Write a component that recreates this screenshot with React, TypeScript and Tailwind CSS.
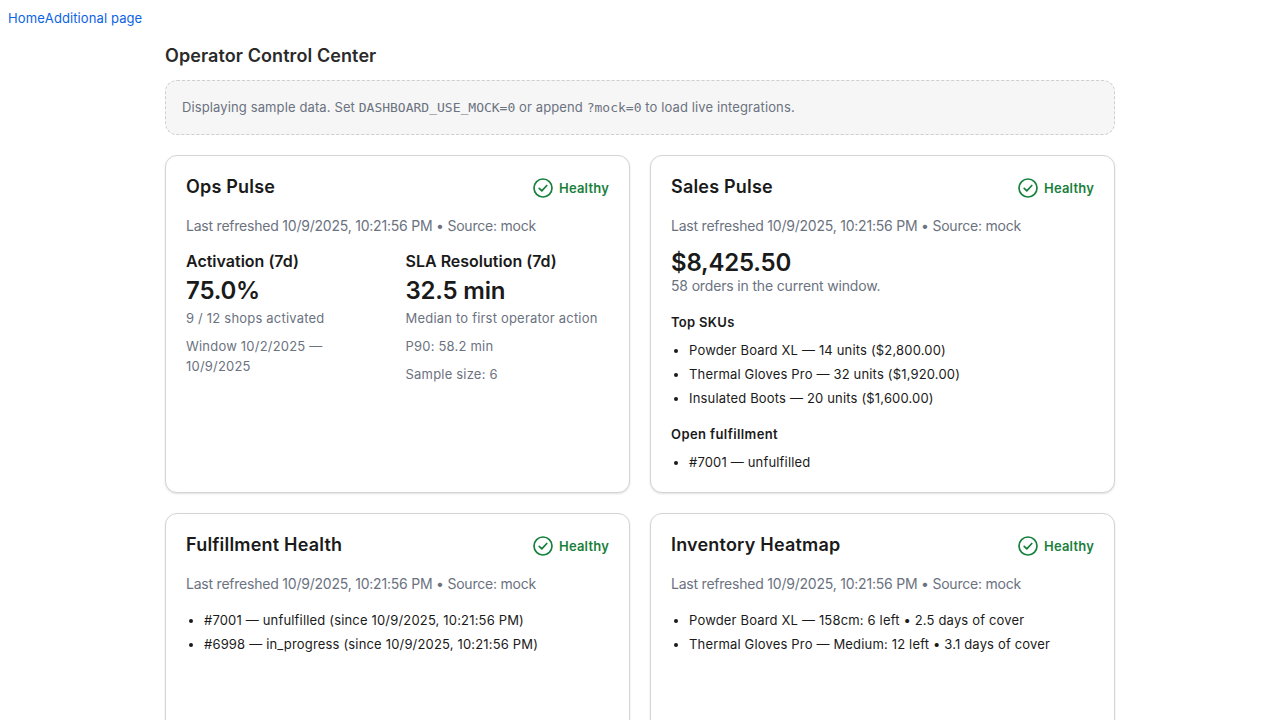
import React from 'react';

const mono = 'font-["DejaVu_Sans_Mono",monospace]';

function HealthyBadge() {
    return (
        <div className="flex items-center gap-[6px] pt-[2px]">
            <svg width="20" height="20" viewBox="0 0 20 20" fill="none" stroke="#16803c">
                <circle cx="10" cy="10" r="9" strokeWidth="1.7" />
                <path d="M6.2 10.3l2.6 2.6 5-5.4" strokeWidth="1.7" strokeLinecap="round" strokeLinejoin="round" />
            </svg>
            <span className="text-[13px] leading-5 font-semibold tracking-[0.2px] text-[#1a7f3c]">Healthy</span>
        </div>
    );
}

function Card({ title, children, className }: { title: string; children: React.ReactNode; className: string }) {
    return (
        <section className={`rounded-xl border border-[#d4d4d4] bg-white px-5 pt-5 shadow-[0_1px_2px_rgba(0,0,0,0.12)] ${className}`}>
            <div className="flex items-start justify-between">
                <h2 className="text-lg leading-[22px] font-semibold tracking-[0.2px] text-[#1a1a1a]">{title}</h2>
                <HealthyBadge />
            </div>
            <p className="mt-[18px] text-sm leading-5 tracking-[-0.22px] text-[#6b7280]">
                Last refreshed 10/9/2025, 10:21:56 PM • Source: mock
            </p>
            {children}
        </section>
    );
}

function Metric({ title, value, lines }: { title: string; value: string; lines: string[] }) {
    return (
        <div>
            <h3 className="text-base leading-5 font-semibold text-[#1a1a1a]">{title}</h3>
            <div className="mt-1 text-2xl leading-8 font-semibold tracking-[-0.2px] text-[#1a1a1a]">{value}</div>
            <div className="mt-[1px] space-y-2 text-[13px] leading-5 tracking-[0.2px] text-[#6b7280]">
                {lines.map((line) => (
                    <p key={line}>{line}</p>
                ))}
            </div>
        </div>
    );
}

function Bullets({ items, className }: { items: string[]; className: string }) {
    return (
        <ul className={`list-disc space-y-1 pl-[18px] text-[13px] leading-5 tracking-[0.17px] text-[#1a1a1a] ${className}`}>
            {items.map((item) => (
                <li key={item}>{item}</li>
            ))}
        </ul>
    );
}

export default function App() {
    return (
        <div className="h-[720px] overflow-hidden bg-white font-['Inter',sans-serif]">
            <nav className="flex px-2 pt-2 text-[13px] leading-5 tracking-[0.1px] text-[#0b63e5]">
                <a href="#">Home</a>
                <a href="#">Additional page</a>
            </nav>
            <main className="mx-auto mt-4 w-[950px]">
                <h1 className="text-lg leading-6 font-semibold tracking-[0.09px] text-[#2a2a2a]">Operator Control Center</h1>
                <div className="mt-3 rounded-xl border border-dashed border-[#cfcfcf] bg-[#f6f6f6] px-4 py-4 text-[13px] leading-5 tracking-[0.12px] text-[#6b7280]">
                    Displaying sample data. Set <code className={`${mono} text-[13px] tracking-normal`}>DASHBOARD_USE_MOCK=0</code> or append{' '}
                    <code className={`${mono} text-[13px] tracking-normal`}>?mock=0</code> to load live integrations.
                </div>
                <div className="mt-5 grid grid-cols-2 gap-5">
                    <Card title="Ops Pulse" className="h-[338px]">
                        <div className="mt-[15px] grid grid-cols-2 gap-4">
                            <Metric
                                title="Activation (7d)"
                                value="75.0%"
                                lines={['9 / 12 shops activated', 'Window 10/2/2025 — 10/9/2025']}
                            />
                            <Metric
                                title="SLA Resolution (7d)"
                                value="32.5 min"
                                lines={['Median to first operator action', 'P90: 58.2 min', 'Sample size: 6']}
                            />
                        </div>
                    </Card>
                    <Card title="Sales Pulse" className="h-[338px]">
                        <div className="mt-[11px] text-2xl leading-[31px] font-semibold tracking-[-0.2px] text-[#1a1a1a]">$8,425.50</div>
                        <p className="text-sm leading-4 tracking-[-0.16px] text-[#6b7280]">58 orders in the current window.</p>
                        <h3 className="mt-[18px] text-[13px] leading-5 font-semibold tracking-[0.3px] text-[#1a1a1a]">Top SKUs</h3>
                        <Bullets
                            className="mt-2"
                            items={[
                                'Powder Board XL — 14 units ($2,800.00)',
                                'Thermal Gloves Pro — 32 units ($1,920.00)',
                                'Insulated Boots — 20 units ($1,600.00)',
                            ]}
                        />
                        <h3 className="mt-4 text-[13px] leading-5 font-semibold tracking-[0.4px] text-[#1a1a1a]">Open fulfillment</h3>
                        <Bullets className="mt-2" items={['#7001 — unfulfilled']} />
                    </Card>
                    <Card title="Fulfillment Health" className="h-[338px]">
                        <Bullets
                            className="mt-[16px]"
                            items={[
                                '#7001 — unfulfilled (since 10/9/2025, 10:21:56 PM)',
                                '#6998 — in_progress (since 10/9/2025, 10:21:56 PM)',
                            ]}
                        />
                    </Card>
                    <Card title="Inventory Heatmap" className="h-[338px]">
                        <Bullets
                            className="mt-[16px]"
                            items={[
                                'Powder Board XL — 158cm: 6 left • 2.5 days of cover',
                                'Thermal Gloves Pro — Medium: 12 left • 3.1 days of cover',
                            ]}
                        />
                    </Card>
                </div>
            </main>
        </div>
    );
}
